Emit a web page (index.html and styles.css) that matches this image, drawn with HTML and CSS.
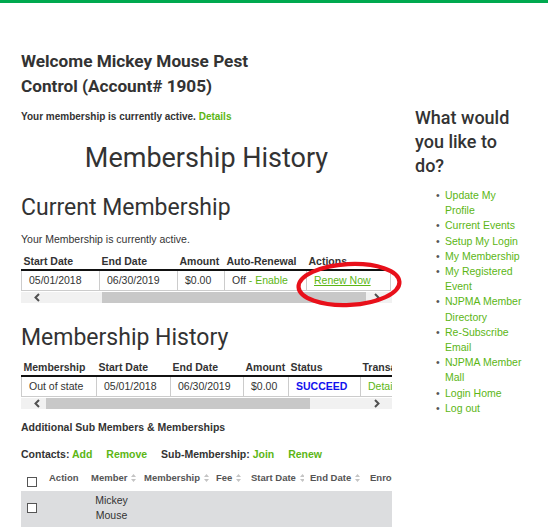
FILE: index.html
```html
<!DOCTYPE html>
<html lang="en">
<head>
    <meta charset="UTF-8">
    <meta name="viewport" content="width=device-width, initial-scale=1.0">
    <title>My Membership</title>
    <link rel="stylesheet" href="styles.css">
</head>
<body>
    <div class="topbar"></div>

    <div class="page">
        <div class="main">
            <h2 class="welcome">Welcome Mickey Mouse Pest Control (Account# 1905)</h2>
            <p class="status">Your membership is currently active. <a href="#">Details</a></p>

            <h1 class="page-title">Membership History</h1>

            <h2 class="section-title">Current Membership</h2>
            <p class="note">Your Membership is currently active.</p>

            <div class="table-wrap">
                <table class="grid grid-current">
                    <tr>
                        <th>Start Date</th>
                        <th>End Date</th>
                        <th>Amount</th>
                        <th>Auto-Renewal</th>
                        <th>Actions</th>
                    </tr>
                    <tr>
                        <td>05/01/2018</td>
                        <td>06/30/2019</td>
                        <td>$0.00</td>
                        <td>Off <a href="#">- Enable</a></td>
                        <td><a href="#" class="underline">Renew Now</a></td>
                    </tr>
                </table>
            </div>
            <div class="scrollbar">
                <span class="arrow arrow-left"><svg width="6" height="9" viewBox="0 0 6 9"><path d="M5 1 L1.5 4.5 L5 8" fill="none" stroke="#505050" stroke-width="2"/></svg></span>
                <span class="track"><span class="thumb thumb-current"></span></span>
                <span class="arrow arrow-right"><svg width="6" height="9" viewBox="0 0 6 9"><path d="M1 1 L4.5 4.5 L1 8" fill="none" stroke="#505050" stroke-width="2"/></svg></span>
            </div>

            <h2 class="section-title history-title">Membership History</h2>

            <div class="table-wrap">
                <table class="grid grid-history">
                    <tr>
                        <th>Membership</th>
                        <th>Start Date</th>
                        <th>End Date</th>
                        <th>Amount</th>
                        <th>Status</th>
                        <th>Transaction</th>
                    </tr>
                    <tr>
                        <td>Out of state</td>
                        <td>05/01/2018</td>
                        <td>06/30/2019</td>
                        <td>$0.00</td>
                        <td class="succeed">SUCCEED</td>
                        <td><a href="#">Details</a></td>
                    </tr>
                </table>
            </div>
            <div class="scrollbar">
                <span class="arrow arrow-left"><svg width="6" height="9" viewBox="0 0 6 9"><path d="M5 1 L1.5 4.5 L5 8" fill="none" stroke="#505050" stroke-width="2"/></svg></span>
                <span class="track"><span class="thumb thumb-history"></span></span>
                <span class="arrow arrow-right"><svg width="6" height="9" viewBox="0 0 6 9"><path d="M1 1 L4.5 4.5 L1 8" fill="none" stroke="#505050" stroke-width="2"/></svg></span>
            </div>

            <p class="sub-heading">Additional Sub Members &amp; Memberships</p>
            <p class="sub-actions">
                Contacts: <a href="#" class="gap">Add</a> <a href="#" class="gap">Remove</a>
                Sub-Membership: <a href="#" class="gap">Join</a> <a href="#">Renew</a>
            </p>

            <div class="table-wrap sub-wrap">
                <table class="sub-table">
                    <tr>
                        <th class="chk"><span class="checkbox"></span></th>
                        <th>Action</th>
                        <th>Member <svg class="sort" width="5" height="8" viewBox="0 0 5 8"><path d="M0 3 L2.5 0 L5 3 Z M0 5 L2.5 8 L5 5 Z" fill="#c4c4c4"/></svg></th>
                        <th>Membership <svg class="sort" width="5" height="8" viewBox="0 0 5 8"><path d="M0 3 L2.5 0 L5 3 Z M0 5 L2.5 8 L5 5 Z" fill="#c4c4c4"/></svg></th>
                        <th>Fee <svg class="sort" width="5" height="8" viewBox="0 0 5 8"><path d="M0 3 L2.5 0 L5 3 Z M0 5 L2.5 8 L5 5 Z" fill="#c4c4c4"/></svg></th>
                        <th>Start Date <svg class="sort" width="5" height="8" viewBox="0 0 5 8"><path d="M0 3 L2.5 0 L5 3 Z M0 5 L2.5 8 L5 5 Z" fill="#c4c4c4"/></svg></th>
                        <th>End Date <svg class="sort" width="5" height="8" viewBox="0 0 5 8"><path d="M0 3 L2.5 0 L5 3 Z M0 5 L2.5 8 L5 5 Z" fill="#c4c4c4"/></svg></th>
                        <th>Enrollment</th>
                    </tr>
                    <tr class="shaded">
                        <td class="chk"><span class="checkbox"></span></td>
                        <td></td>
                        <td class="member">Mickey Mouse</td>
                        <td></td>
                        <td></td>
                        <td></td>
                        <td></td>
                        <td></td>
                    </tr>
                </table>
            </div>
        </div>

        <div class="side">
            <h3 class="side-title">What would you like to do?</h3>
            <ul class="side-menu">
                <li><a href="#">Update My Profile</a></li>
                <li><a href="#">Current Events</a></li>
                <li><a href="#">Setup My Login</a></li>
                <li><a href="#">My Membership</a></li>
                <li><a href="#">My Registered Event</a></li>
                <li><a href="#">NJPMA Member Directory</a></li>
                <li><a href="#">Re-Subscribe Email</a></li>
                <li><a href="#">NJPMA Member Mall</a></li>
                <li><a href="#">Login Home</a></li>
                <li><a href="#">Log out</a></li>
            </ul>
        </div>
    </div>

    <svg class="annotation" width="108" height="50" viewBox="0 0 108 50">
        <ellipse cx="54" cy="24.5" rx="50.5" ry="20.5" fill="none" stroke="#e8101a" stroke-width="4.2" transform="rotate(-3 54 24.5)"/>
    </svg>
</body>
</html>
```

FILE: styles.css
```css
body {
    margin: 0;
    font-family: "Liberation Sans", Arial, sans-serif;
    color: #333;
    background: #fff;
}

a {
    color: #5cb615;
    text-decoration: none;
}

.topbar {
    height: 3px;
    background-color: #00a94f;
}

.page {
    display: flex;
    padding: 0 21px;
}

.main {
    width: 371px;
    padding-top: 46px;
}

.side {
    width: 110px;
    margin-left: 23px;
    padding-top: 103px;
}

.welcome {
    font-family: Roboto, sans-serif;
    font-weight: bold;
    font-size: 17.2px;
    line-height: 25px;
    width: 260px;
    margin: 0;
}

.status {
    font-weight: bold;
    font-size: 10px;
    line-height: 12px;
    margin: 12px 0 0;
}

.page-title {
    font-family: Roboto, sans-serif;
    font-weight: normal;
    font-size: 27px;
    line-height: 32px;
    text-align: center;
    margin: 19px 0 0;
}

.section-title {
    font-family: Roboto, sans-serif;
    font-weight: normal;
    font-size: 23px;
    line-height: 28px;
    margin: 20px 0 0;
}

.history-title {
    margin-top: 21px;
}

.note {
    font-size: 10.5px;
    line-height: 12px;
    margin: 11px 0 0;
}

.table-wrap {
    overflow: hidden;
    margin-top: 10px;
}

.history-title + .table-wrap {
    margin-top: 9px;
}

.grid {
    border-collapse: collapse;
    table-layout: fixed;
    font-size: 10.5px;
    line-height: 12px;
    white-space: nowrap;
}

.grid-current {
    width: 369px;
}

.grid-history {
    width: 420px;
}

.grid th {
    box-sizing: border-box;
    text-align: left;
    font-weight: bold;
    padding: 0 2px 2px 2px;
    border-bottom: 2px solid #111;
    overflow: hidden;
}

.grid td {
    padding: 3px 6px 4px 7px;
    border: 1px solid #ccc;
    border-top: none;
    overflow: hidden;
}

.grid-current th:nth-child(1) { width: 78px; }
.grid-current th:nth-child(2) { width: 78px; }
.grid-current th:nth-child(3) { width: 47px; }
.grid-current th:nth-child(4) { width: 82px; }
.grid-current th:nth-child(5) { width: 84px; }

.grid-history th:nth-child(1) { width: 75px; }
.grid-history th:nth-child(2) { width: 74px; }
.grid-history th:nth-child(3) { width: 73px; }
.grid-history th:nth-child(4) { width: 45px; }
.grid-history th:nth-child(5) { width: 72px; }
.grid-history th:nth-child(6) { width: 81px; }

.succeed {
    color: #1111ee;
    font-weight: bold;
}

.underline {
    text-decoration: underline;
}

.scrollbar {
    display: flex;
    height: 11px;
    background: #f1f1f1;
    margin-top: 1px;
}

.arrow {
    width: 25px;
    display: flex;
    align-items: center;
    box-sizing: border-box;
}

.arrow-left {
    justify-content: center;
    padding-left: 6px;
}

.arrow-right {
    padding-left: 7px;
}

.track {
    flex: 1;
    position: relative;
}

.thumb {
    position: absolute;
    top: 0;
    bottom: 0;
    background: #c8c8c8;
}

.thumb-current {
    left: 56px;
    right: 1px;
}

.thumb-history {
    left: 0;
    right: 57px;
}

.sub-heading {
    font-weight: bold;
    font-size: 10.5px;
    line-height: 12px;
    margin: 12px 0 0;
}

.sub-actions {
    font-weight: bold;
    font-size: 10.5px;
    line-height: 12px;
    margin: 15px 0 0;
}

.sub-actions .gap {
    margin-right: 11px;
}

.sub-wrap {
    margin-top: 8px;
}

.sub-table {
    border-collapse: collapse;
    table-layout: fixed;
    width: 403px;
    font-size: 10.5px;
}

.sub-table th {
    box-sizing: border-box;
    text-align: left;
    font-weight: bold;
    font-size: 9.5px;
    line-height: 12px;
    color: #555;
    padding: 4px 0 7px 6px;
    vertical-align: top;
    white-space: nowrap;
    overflow: hidden;
}

.sub-table th.chk {
    padding: 9px 0 4px 6px;
}

.sub-table th:nth-child(1) { width: 22px; }
.sub-table th:nth-child(2) { width: 42px; }
.sub-table th:nth-child(3) { width: 53px; }
.sub-table th:nth-child(4) { width: 72px; }
.sub-table th:nth-child(5) { width: 35px; }
.sub-table th:nth-child(6) { width: 59px; }
.sub-table th:nth-child(7) { width: 60px; }
.sub-table th:nth-child(8) { width: 60px; }

.sort {
    margin-left: 1px;
    vertical-align: -1px;
}

.checkbox {
    display: block;
    width: 8px;
    height: 8px;
    border: 1px solid #555;
    background: #fff;
}

.shaded {
    background: #dcdddf;
}

.shaded td {
    padding: 2px 6px 4px 6px;
    line-height: 15px;
    vertical-align: middle;
}

.shaded td.member {
    text-align: center;
    padding-left: 4px;
    padding-right: 4px;
}

.side-title {
    font-family: Roboto, sans-serif;
    font-weight: 500;
    font-size: 18px;
    line-height: 24px;
    margin: 0;
}

.side-menu {
    margin: 10px 0 0;
    padding-left: 30px;
    font-size: 10.5px;
    line-height: 15.2px;
    list-style: none;
}

.side-menu li {
    position: relative;
}

.side-menu li::before {
    content: "\2022";
    position: absolute;
    left: -9px;
    color: #555;
}

.annotation {
    position: absolute;
    left: 295px;
    top: 260px;
}
```
